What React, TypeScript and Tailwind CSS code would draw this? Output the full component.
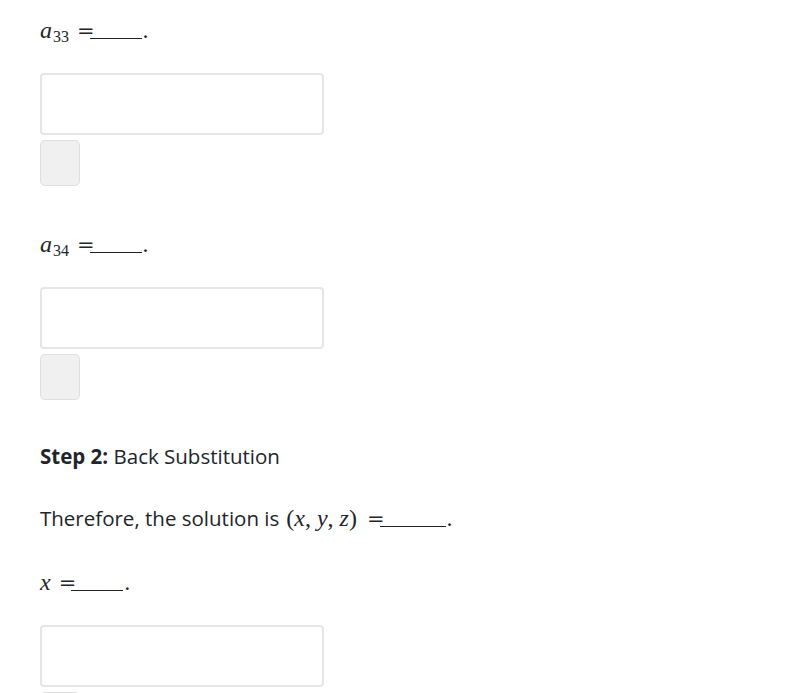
const blanks = [
  { id: 'a33', sub: '33' },
  { id: 'a34', sub: '34' },
]

function Blank({ width = 'w-[52px]' }: { width?: string }) {
  return (
    <span className="inline-flex items-baseline">
      <span className="relative z-10 text-[21px] [font-family:'DejaVu_Serif',serif]">=</span>
      <span className={`-ml-[5px] inline-block ${width} translate-y-[1px] border-b border-[#222]`} />
      <span className="ml-[1px]">.</span>
    </span>
  )
}

function AnswerBox() {
  return (
    <div className="flex flex-col gap-[5px]">
      <div className="h-[62px] w-[284px] rounded-[4px] border-2 border-[#e6e6e6] bg-white" />
      <div className="h-[46px] w-[40px] rounded-[5px] border border-[#dedede] bg-[#f0f0f0]" />
    </div>
  )
}

export default function App() {
  return (
    <div className="min-h-[693px] overflow-hidden bg-white pl-[40px] pt-[15px] text-[#212529] [font-family:'Open_Sans',sans-serif]">
      {blanks.map((b) => (
        <div key={b.id} className="mb-[43px]">
          <div className="flex items-baseline gap-[8px] text-[24px] leading-[30px] [font-family:'Liberation_Serif',serif]">
            <span className="italic">
              a<sub className="ml-[1px] text-[16px] not-italic">{b.sub}</sub>
            </span>
            <Blank />
          </div>
          <div className="mt-[27px]">
            <AnswerBox />
          </div>
        </div>
      ))}

      <div className="-mt-[1px] text-[20.5px] leading-[28px]">
        <span className="font-bold">Step 2:</span> Back Substitution
      </div>

      <div className="mt-[34px] flex items-baseline text-[20.5px] leading-[28px]">
        <span>Therefore, the solution is</span>
        <span className="ml-[7px] flex items-baseline gap-[10px] text-[24px] [font-family:'Liberation_Serif',serif]">
          <span>
            (<i>x</i>, <i>y</i>, <i>z</i>)
          </span>
          <Blank width="w-[66px]" />
        </span>
      </div>

      <div className="mt-[34px] flex items-baseline gap-[8px] text-[24px] leading-[30px] [font-family:'Liberation_Serif',serif]">
        <i>x</i>
        <Blank />
      </div>

      <div className="mt-[27px]">
        <AnswerBox />
      </div>
    </div>
  )
}
